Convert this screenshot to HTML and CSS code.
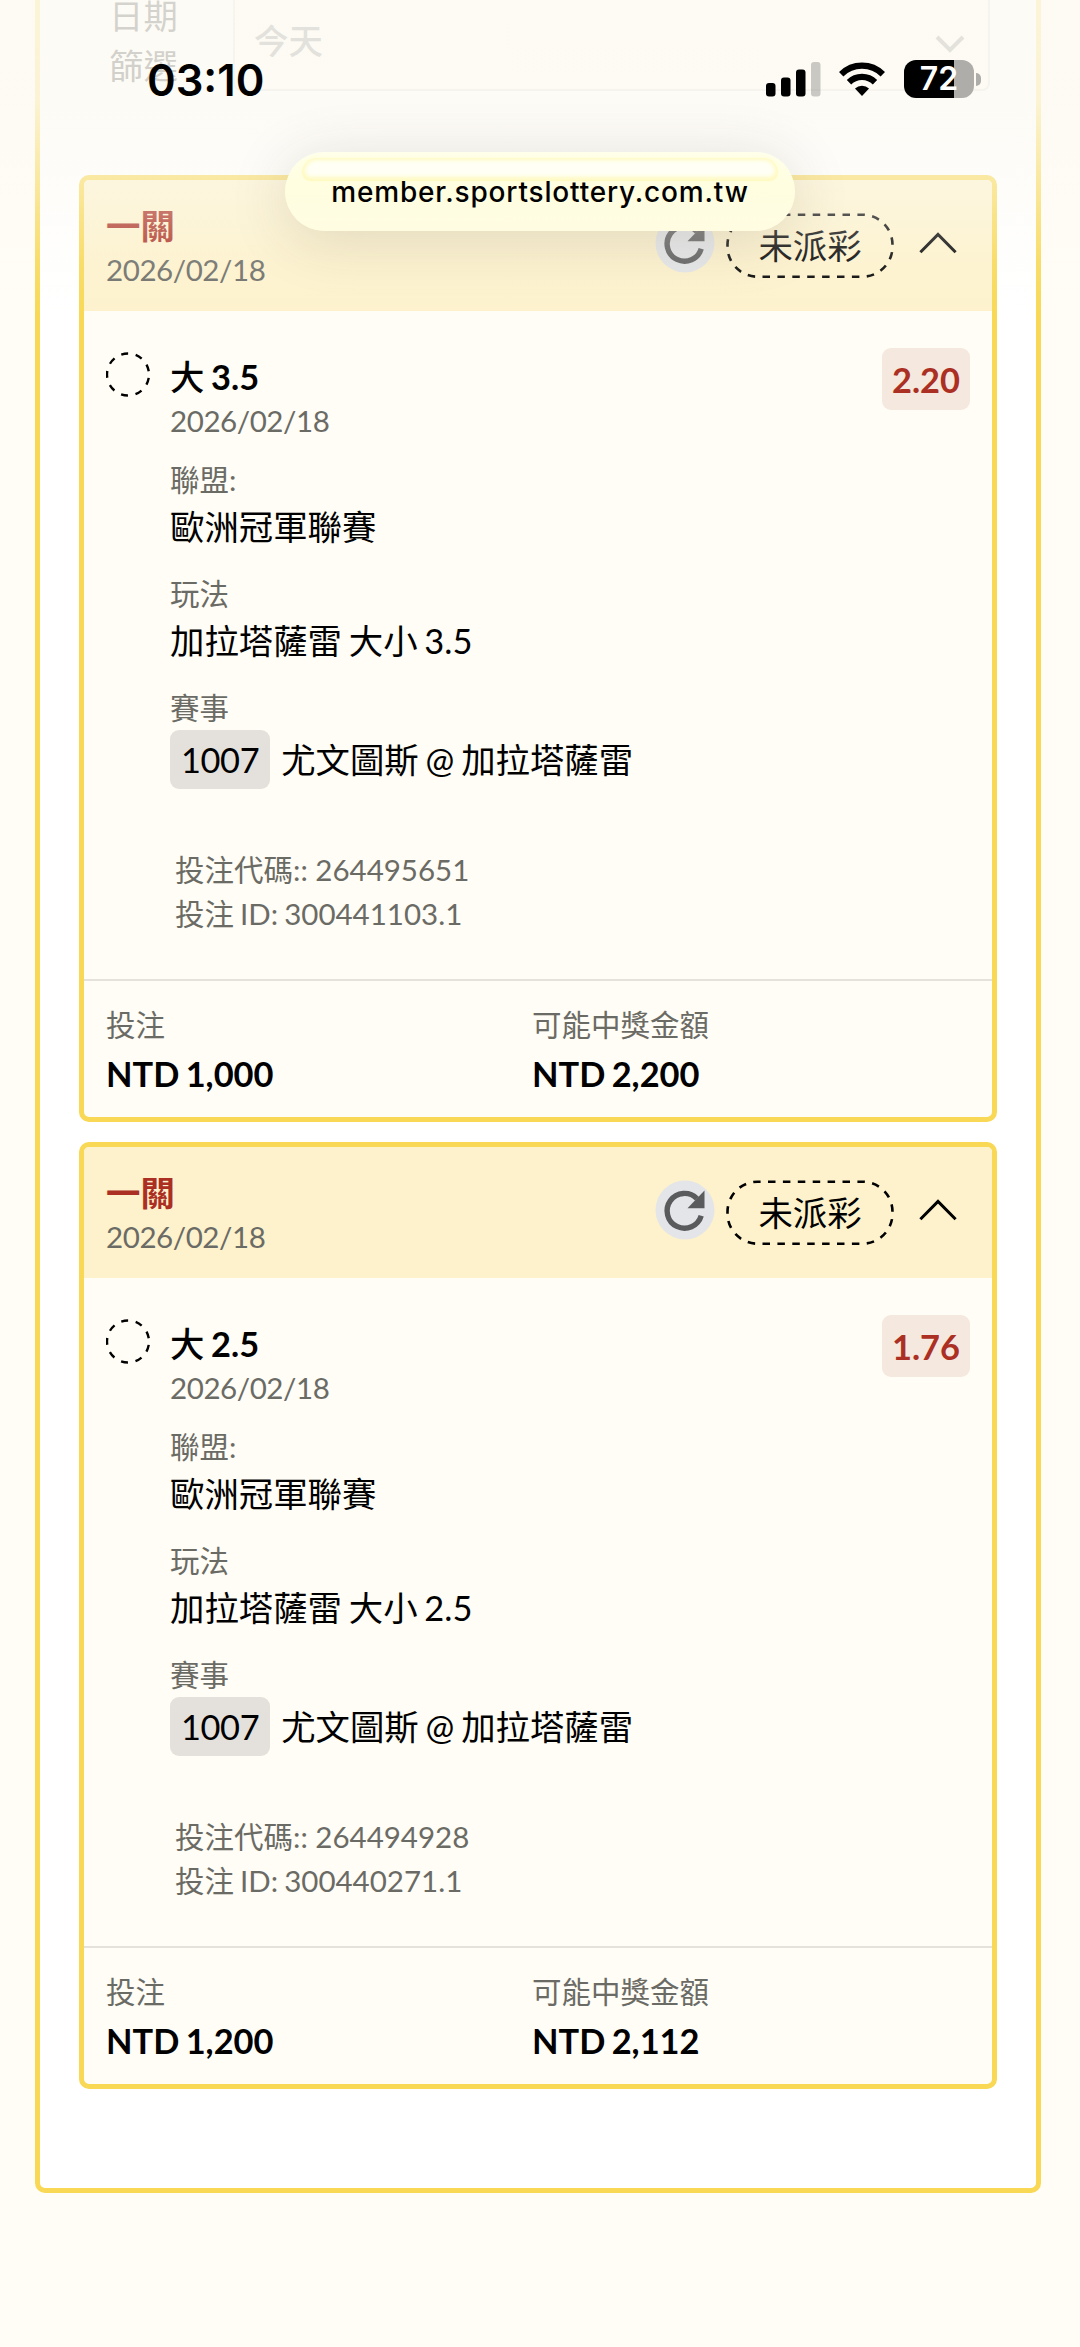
FILE: index.html
```html
<!DOCTYPE html>
<html lang="zh-Hant">
<head>
<meta charset="utf-8">
<title>投注紀錄</title>
<link rel="stylesheet" href="styles.css">
</head>
<body>
<svg class="defs" aria-hidden="true">
  <symbol id="pending" viewBox="0 0 44 46"><circle cx="22" cy="22.5" r="21" fill="none" stroke="#000" stroke-width="2.4" stroke-dasharray="7 7.66" stroke-dashoffset="-3.5"/></symbol>
  <symbol id="refresh" viewBox="0 0 60 60"><circle cx="30" cy="30" r="29.5" fill="#e3e5e8"/><path d="M46.2 35.8A17.4 17.4 0 1 1 41.9 18.6" fill="none" stroke="#5a5b5d" stroke-width="5.4"/><path d="M49.5 10.5V28.2H32.5Z" fill="#5a5b5d"/></symbol>
  <symbol id="pill" viewBox="0 0 168 66"><rect x="1.5" y="1.7" width="165" height="62" rx="30" fill="none" stroke="#000" stroke-width="2.6" stroke-dasharray="7.5 7.4" stroke-dashoffset="-10.5"/></symbol>
  <symbol id="up" viewBox="0 0 38 22"><path d="M1.4 20.2L19 2.4L36.6 20.2" fill="none" stroke="#000" stroke-width="3"/></symbol>
</svg>
<main class="panel">
  <div class="filter">
    <div class="filter-label">日期<br>篩選</div>
    <div class="filter-select"><span>今天</span><svg class="down" viewBox="0 0 30 18"><path d="M2 2L15 15L28 2" fill="none" stroke="#222" stroke-width="4"/></svg></div>
  </div>
  <article class="card">
    <header class="card-head">
      <div><div class="combo">一關</div><div class="date">2026/02/18</div></div>
      <div class="actions"><svg class="refresh"><use href="#refresh"/></svg><div class="status"><svg><use href="#pill"/></svg><span>未派彩</span></div><svg class="up"><use href="#up"/></svg></div>
    </header>
    <section class="card-body">
      <svg class="pending"><use href="#pending"/></svg>
      <div class="details">
        <div class="pick">大 <b>3.5</b></div><div class="date">2026/02/18</div>
        <dl><dt>聯盟:</dt><dd>歐洲冠軍聯賽</dd></dl>
        <dl><dt>玩法</dt><dd>加拉塔薩雷 大小 3.5</dd></dl>
        <dl><dt>賽事</dt><dd class="match"><span class="code">1007</span>尤文圖斯 @ 加拉塔薩雷</dd></dl>
        <div class="ids"><div>投注代碼:: 264495651</div><div class="bet-id">投注 ID: 300441103.1</div></div>
      </div>
      <div class="odds">2.20</div>
    </section>
    <footer class="card-foot">
      <dl><dt>投注</dt><dd>NTD 1,000</dd></dl>
      <dl><dt>可能中獎金額</dt><dd>NTD 2,200</dd></dl>
    </footer>
  </article>
  <article class="card">
    <header class="card-head">
      <div><div class="combo">一關</div><div class="date">2026/02/18</div></div>
      <div class="actions"><svg class="refresh"><use href="#refresh"/></svg><div class="status"><svg><use href="#pill"/></svg><span>未派彩</span></div><svg class="up"><use href="#up"/></svg></div>
    </header>
    <section class="card-body">
      <svg class="pending"><use href="#pending"/></svg>
      <div class="details">
        <div class="pick">大 <b>2.5</b></div><div class="date">2026/02/18</div>
        <dl><dt>聯盟:</dt><dd>歐洲冠軍聯賽</dd></dl>
        <dl><dt>玩法</dt><dd>加拉塔薩雷 大小 2.5</dd></dl>
        <dl><dt>賽事</dt><dd class="match"><span class="code">1007</span>尤文圖斯 @ 加拉塔薩雷</dd></dl>
        <div class="ids"><div>投注代碼:: 264494928</div><div class="bet-id">投注 ID: 300440271.1</div></div>
      </div>
      <div class="odds">1.76</div>
    </section>
    <footer class="card-foot">
      <dl><dt>投注</dt><dd>NTD 1,200</dd></dl>
      <dl><dt>可能中獎金額</dt><dd>NTD 2,112</dd></dl>
    </footer>
  </article>
</main>
<div class="veil"></div>
<div class="statusbar">
  <span class="clock">03:10</span>
  <div class="indicators">
    <svg class="signal" viewBox="0 0 55 36"><rect x="0" y="21" width="9.5" height="13.5" rx="3"/><rect x="15" y="15.5" width="9.5" height="19" rx="3"/><rect x="30" y="7.5" width="9.5" height="27" rx="3"/><rect x="45" y="0" width="9.5" height="34.5" rx="3" opacity=".2"/></svg>
    <svg class="wifi" viewBox="0 0 48 36"><path d="M3.2 13.2A29.5 29.5 0 0 1 44.8 13.2M11 21.3A18.3 18.3 0 0 1 37 21.3" fill="none" stroke="#000" stroke-width="6.2"/><path d="M17 27.5A10.5 10.5 0 0 1 31 27.5L24 35Z"/></svg>
    <div class="battery"><span>72</span></div><i class="nub"></i>
  </div>
</div>
<div class="url"><span>member.sportslottery.com.tw</span></div>
</body>
</html>
```
FILE: styles.css
```css
* { box-sizing: border-box; }
body {
  margin: 0;
  position: relative;
  height: 2347px;
  overflow: hidden;
  background: #fffdf5;
  color: #000;
  font-family: Lato, "Noto Sans CJK TC", sans-serif;
  font-size: 34.4px;
  word-spacing: -2px;
}
dl, dd { margin: 0; }
svg { display: block; }
.defs { position: absolute; width: 0; height: 0; }

.panel {
  height: 2193px;
  margin: 0 39px 0 35px;
  padding: 0 39px;
  background: #fff;
  border: 5px solid #f8d854;
  border-top: 0;
  border-radius: 0 0 10px 10px;
}
.filter { display: flex; height: 175px; }
.filter-label { width: 154px; padding-left: 30px; line-height: 50px; margin-top: -9px; color: #222; }
.filter-select {
  display: flex; justify-content: space-between; align-items: center;
  width: 757px; height: 91px; padding: 0 23px 6px 19px;
  background: #fffdf5; border: 2px solid #dddbd6; border-top: 0;
  border-radius: 0 0 8px 8px; color: #777; font-weight: 500;
}
.filter-select span { margin-top: -5px; }
.down { width: 30px; height: 18px; margin-top: 5px; opacity: .6; }

.card {
  height: 947px;
  margin-bottom: 20px;
  background: #fffdf5;
  border: 5px solid #f8d854;
  border-radius: 10px;
  overflow: hidden;
}
.card-head {
  display: flex; justify-content: space-between;
  height: 131px; padding: 24px 35px 0 22px;
  background: #fdf2cc;
}
.combo { line-height: 44px; font-weight: 700; color: #ab2f22; }
.date { font-size: 29.5px; line-height: 44px; letter-spacing: -.42px; color: #6b6b66; }
.actions { display: flex; height: 66px; margin-top: 9px; }
.refresh { width: 60px; height: 60px; }
.status { position: relative; width: 168px; height: 66px; margin: 0 25px 0 11px; text-align: center; line-height: 65px; }
.status svg { position: absolute; inset: 0; width: 168px; height: 66px; }
.up { width: 38px; height: 22px; margin-top: 19px; }

.card-body { display: flex; height: 668px; padding: 37px 22px 0; }
.pending { width: 44px; height: 46px; margin-top: 4px; }
.details { flex: 1; padding: 7px 0 0 20px; }
.pick { line-height: 44px; font-weight: 500; }
.pick b { font-weight: 700; }
.details dl { margin-top: 20px; }
.details .date + dl { margin-top: 15px; }
dt, .ids { font-size: 29.5px; line-height: 44px; color: #6b6b66; }
dd { line-height: 50px; }
.match { display: flex; align-items: center; }
.code { height: 59px; padding: 0 11px; margin-right: 11px; line-height: 59px; letter-spacing: -.4px; border-radius: 9px; background: #e4e1dc; }
.ids { margin-top: 59px; padding-left: 5px; word-spacing: 0; }
.bet-id { word-spacing: -1.5px; }
.odds { height: 62px; padding: 0 10px; line-height: 63px; font-weight: 700; color: #ab2f22; background: #f5e8df; border-radius: 9px; }

.card-foot { display: grid; grid-template-columns: 426px 1fr; height: 138px; padding: 22px; border-top: 2px solid #e5e2dc; }
.card-foot dd { padding-top: 2px; font-weight: 700; }

/* translucent fade under the system bar */
.veil {
  position: absolute; inset: 0 0 auto; height: 330px;
  background: linear-gradient(rgba(252,250,243,.82) 0, rgba(252,250,243,.8) 100px, rgba(252,250,243,.5) 175px, rgba(252,250,243,.15) 260px, rgba(252,250,243,0) 320px);
}
.statusbar { position: absolute; inset: 0 0 auto; height: 100px; display: flex; justify-content: space-between; padding: 60px 99px 0 147px; }
.clock { font: 600 43.5px/40px Inter, sans-serif; }
.indicators { display: flex; }
.signal { width: 55px; height: 36px; margin-top: 2px; }
.wifi { width: 48px; height: 36px; margin: 1px 18px 0 17px; }
.battery { width: 70px; height: 38px; border-radius: 12px; background: linear-gradient(90deg, #000 50px, #aeada9 50px); color: #fff; text-align: center; font: 600 32px/38px Inter, sans-serif; }
.nub { width: 5px; height: 13px; margin: 13px 0 0 2px; border-radius: 0 6px 6px 0; background: #aeada9; }
.url {
  position: absolute; left: 285px; top: 152px; width: 510px; height: 79px;
  border-radius: 40px; background: linear-gradient(#ffffea, #fffee0 40%, #fffce2); text-align: center;
  font: 500 28px/80px Inter, sans-serif; letter-spacing: .82px;
  box-shadow: 0 8px 60px rgba(60,50,20,.15);
}
.url span { position: relative; }
.url::before {
  content: ""; position: absolute; left: 17px; right: 17px; top: 6px; height: 23px; border-radius: 20px 20px 12px 12px;
  background: #fffff6; box-shadow: inset 0 -1px 4px 3px #fffabf, 0 0 3px #fffccf;
}
```
